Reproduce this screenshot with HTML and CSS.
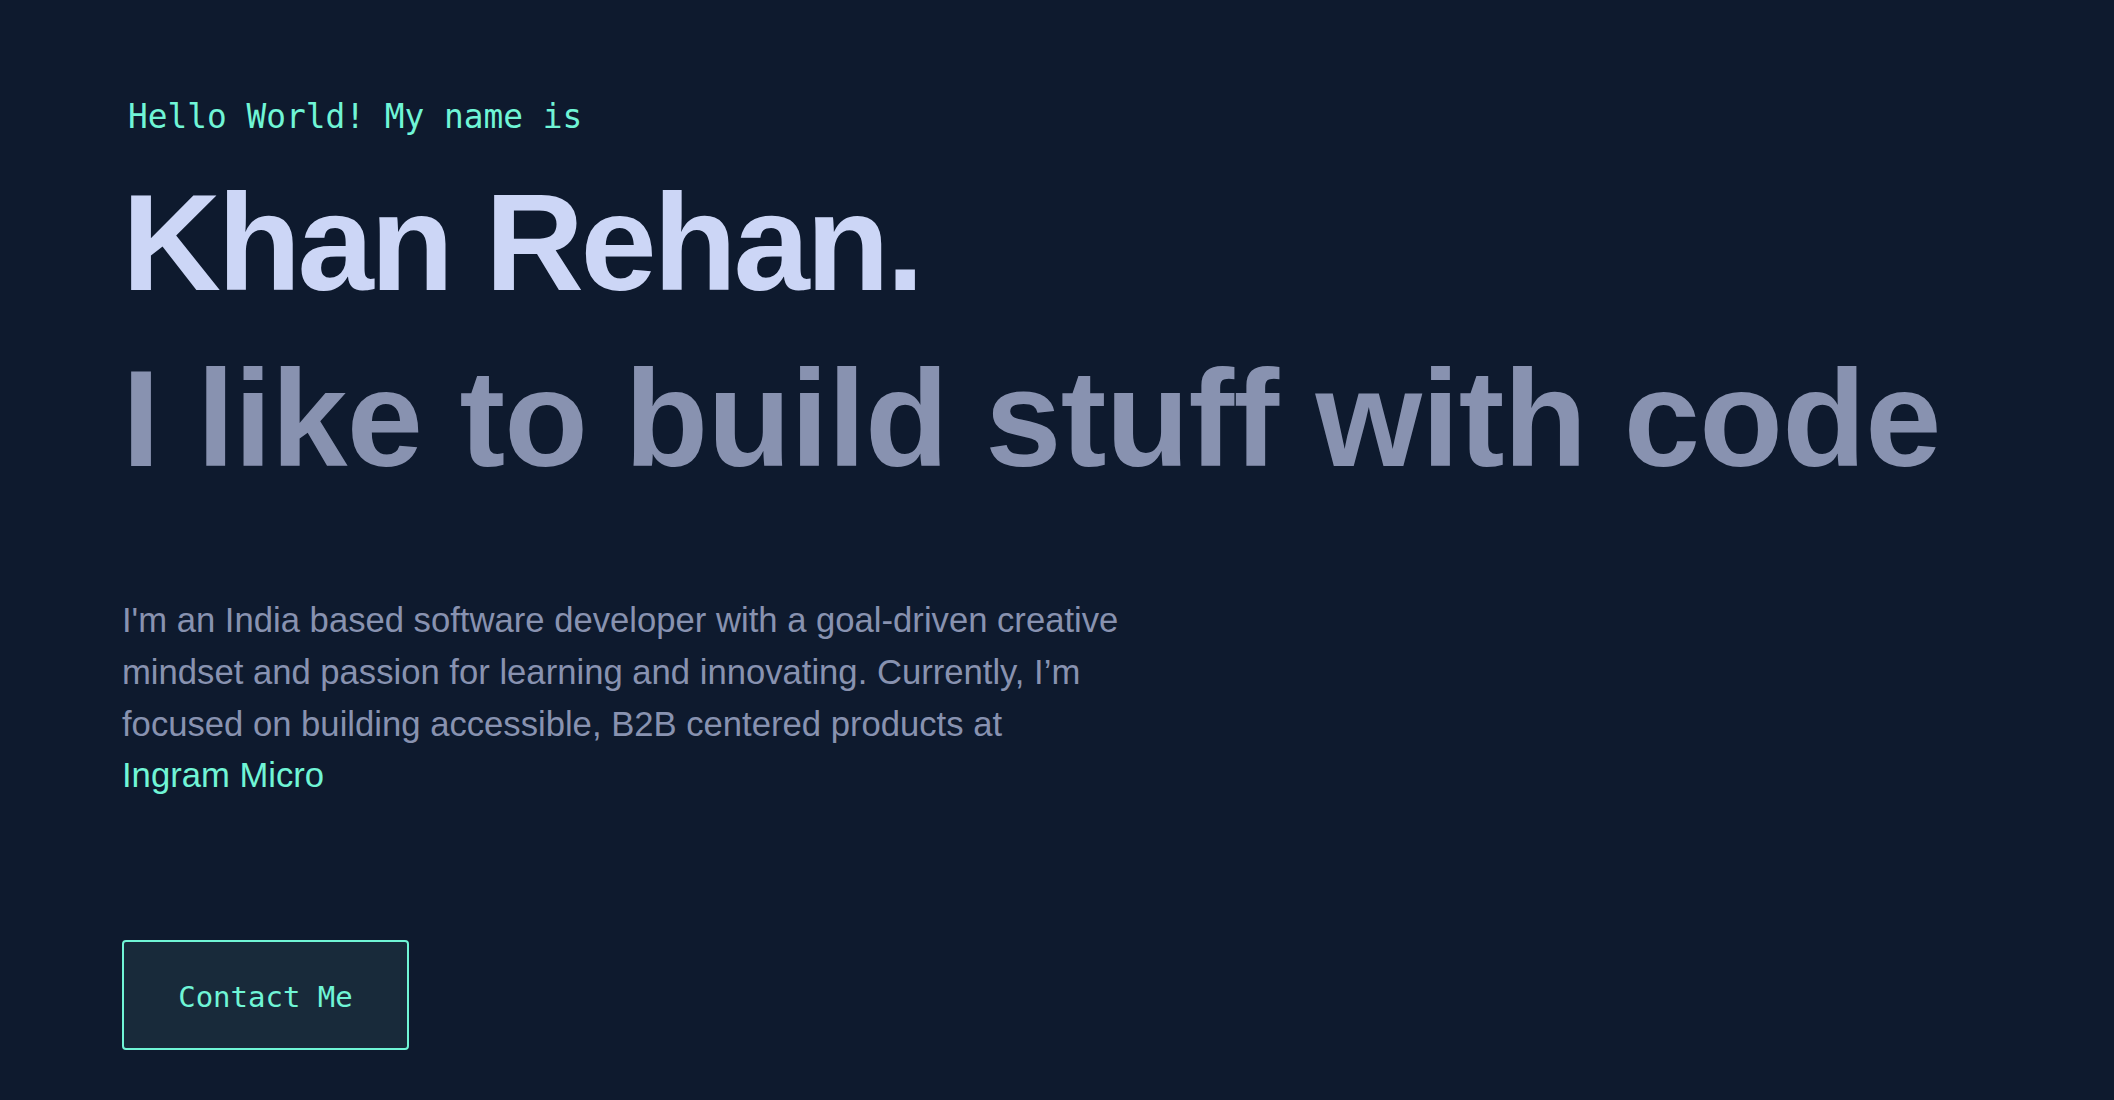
FILE: index.html
```html
<!DOCTYPE html>
<html lang="en">
<head>
<meta charset="utf-8">
<title>Khan Rehan</title>
<link rel="stylesheet" href="styles.css">
</head>
<body>
<main class="page">
  <section class="hero">
    <p class="hero-greeting">Hello World! My name is</p>
    <h1 class="hero-name">Khan Rehan.</h1>
    <h2 class="hero-tagline">I like to build stuff with code</h2>
    <p class="hero-about">I'm an India based software developer with a goal-driven creative mindset and passion for learning and innovating. Currently, I’m focused on building accessible, B2B centered products at<br><a class="hero-link" href="#">Ingram Micro</a></p>
    <a class="hero-button" href="#">Contact Me</a>
  </section>
</main>
</body>
</html>
```

FILE: styles.css
```css
html, body {
  margin: 0;
  padding: 0;
}

body {
  background: #0e1a2e;
  min-height: 1100px;
  font-family: "Liberation Sans", Arial, sans-serif;
}

.page {
  padding: 99px 0 0 122px;
}

.hero {
  display: flex;
  flex-direction: column;
  align-items: flex-start;
}

.hero-greeting {
  margin: 0 0 32px 6px;
  font-family: "DejaVu Sans Mono", "Liberation Mono", monospace;
  font-size: 32.8px;
  line-height: 36px;
  color: #70f5d6;
}

.hero-name,
.hero-tagline {
  margin: 0;
  font-family: "Liberation Sans", Arial, sans-serif;
  font-weight: 700;
  font-size: 137px;
  line-height: 151px;
  white-space: nowrap;
}

.hero-name {
  color: #ccd6f6;
  letter-spacing: -3.5px;
}

.hero-tagline {
  margin-top: 25px;
  color: #8892b0;
  letter-spacing: -0.75px;
}

.hero-about {
  margin: 101px 0 0;
  max-width: 1040px;
  font-size: 34.65px;
  line-height: 51.75px;
  color: #8892b0;
}

.hero-link {
  color: #70f5d6;
  text-decoration: none;
}

.hero-button {
  margin-top: 138px;
  box-sizing: border-box;
  width: 287px;
  height: 110px;
  padding-top: 3px;
  display: flex;
  align-items: center;
  justify-content: center;
  border: 2px solid #70f5d6;
  border-radius: 4px;
  background: #182a3a;
  color: #70f5d6;
  font-family: "DejaVu Sans Mono", "Liberation Mono", monospace;
  font-size: 29px;
  text-decoration: none;
}
```
